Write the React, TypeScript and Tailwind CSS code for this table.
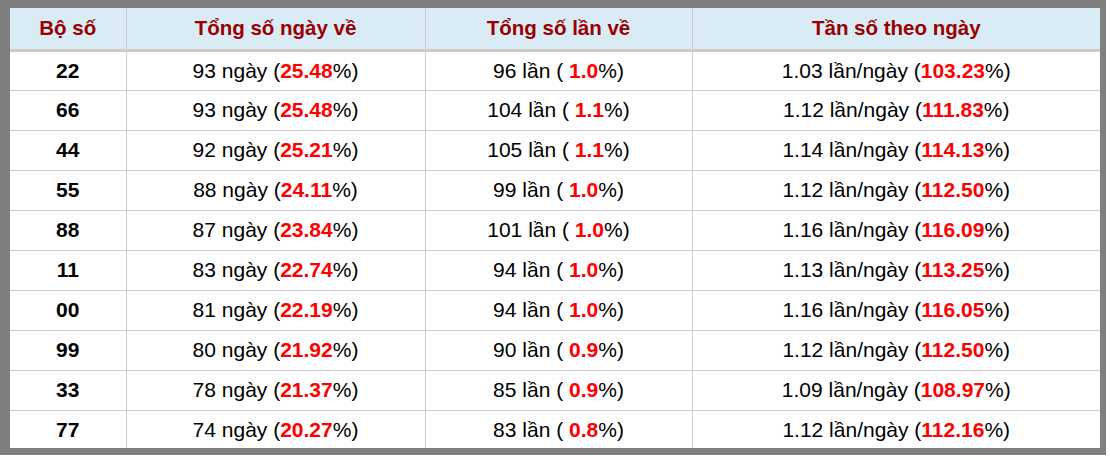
const rows: [string, string, string, string, string, string, string][] = [
  ["22", "93", "25.48", "96", "1.0", "1.03", "103.23"],
  ["66", "93", "25.48", "104", "1.1", "1.12", "111.83"],
  ["44", "92", "25.21", "105", "1.1", "1.14", "114.13"],
  ["55", "88", "24.11", "99", "1.0", "1.12", "112.50"],
  ["88", "87", "23.84", "101", "1.0", "1.16", "116.09"],
  ["11", "83", "22.74", "94", "1.0", "1.13", "113.25"],
  ["00", "81", "22.19", "94", "1.0", "1.16", "116.05"],
  ["99", "80", "21.92", "90", "0.9", "1.12", "112.50"],
  ["33", "78", "21.37", "85", "0.9", "1.09", "108.97"],
  ["77", "74", "20.27", "83", "0.8", "1.12", "112.16"],
];

export default function App() {
  return (
    <div className="h-[458px] w-[1110px] bg-white font-['Liberation_Sans',Arial,sans-serif]">
      <div className="w-[1106px] border-solid border-[#7f7f7f] border-t-8 border-l-[10px] border-r-[6px] border-b-[7px]">
        <table className="w-full table-fixed border-collapse text-[21px] text-black">
          <colgroup>
            <col className="w-[116px]" />
            <col className="w-[299px]" />
            <col className="w-[267px]" />
            <col />
          </colgroup>
          <thead>
            <tr className="h-[42px] bg-[#d9ecf5] text-[20.5px] text-[#990000]">
              <th className="border-b-[3px] border-[#cccccc] font-bold">Bộ số</th>
              <th className="border-b-[3px] border-l border-[#cccccc] font-bold">Tổng số ngày về</th>
              <th className="border-b-[3px] border-l border-[#cccccc] font-bold">Tổng số lần về</th>
              <th className="border-b-[3px] border-l border-[#cccccc] font-bold">Tần số theo ngày</th>
            </tr>
          </thead>
          <tbody>
            {rows.map((r, i) => {
              const last = i === rows.length - 1;
              const b = last ? "" : "border-b border-[#cccccc]";
              return (
                <tr key={r[0]} className={last ? "h-[38px] text-center" : "h-10 text-center"}>
                  <td className={`font-bold ${b}`}>{r[0]}</td>
                  <td className={`border-l border-[#cccccc] ${b}`}>
                    {r[1]} ngày (<span className="font-bold text-[#ff0000]">{r[2]}</span>%)
                  </td>
                  <td className={`border-l border-[#cccccc] ${b}`}>
                    {r[3]} lần ( <span className="font-bold text-[#ff0000]">{r[4]}</span>%)
                  </td>
                  <td className={`border-l border-[#cccccc] ${b}`}>
                    {r[5]} lần/ngày (<span className="font-bold text-[#ff0000]">{r[6]}</span>%)
                  </td>
                </tr>
              );
            })}
          </tbody>
        </table>
      </div>
    </div>
  );
}
